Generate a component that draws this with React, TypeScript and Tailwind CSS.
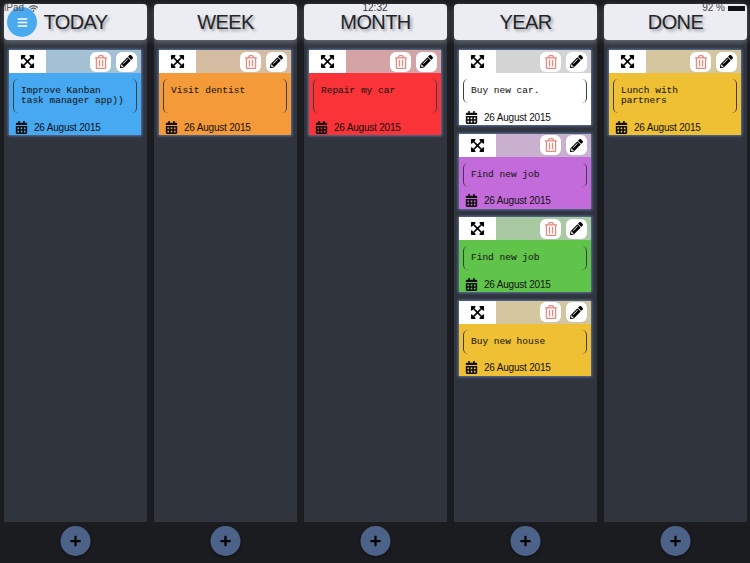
import { FaBars, FaCalendarAlt, FaExpandArrowsAlt, FaPencilAlt, FaPlus, FaRegTrashAlt, FaWifi } from "react-icons/fa";

type Note = { text: string[]; bg: string; head: string; tall?: boolean };

const columns: { title: string; notes: Note[] }[] = [
  { title: "TODAY", notes: [{ text: ["Improve Kanban", "task manager app))"], bg: "bg-[#46a9f2]", head: "bg-[#a3c0d4]", tall: true }] },
  { title: "WEEK", notes: [{ text: ["Visit dentist"], bg: "bg-[#f59a38]", head: "bg-[#d4bda3]", tall: true }] },
  { title: "MONTH", notes: [{ text: ["Repair my car"], bg: "bg-[#fa3338]", head: "bg-[#d4a3a6]", tall: true }] },
  {
    title: "YEAR",
    notes: [
      { text: ["Buy new car."], bg: "bg-white", head: "bg-[#d4d4d4]" },
      { text: ["Find new job"], bg: "bg-[#c46bdb]", head: "bg-[#c9b0cf]" },
      { text: ["Find new job"], bg: "bg-[#61c44a]", head: "bg-[#a9c9a3]" },
      { text: ["Buy new house"], bg: "bg-[#f0c034]", head: "bg-[#d4c7a0]" },
    ],
  },
  { title: "DONE", notes: [{ text: ["Lunch with", "partners"], bg: "bg-[#f0c034]", head: "bg-[#d4c7a0]", tall: true }] },
];

function Card({ note }: { note: Note }) {
  return (
    <div className="border border-[#4d5f7e] rounded-[2px] shrink-0 mb-[6.5px] shadow-[0_0_2px_1px_rgba(77,95,126,0.75)]">
      <div className={`flex items-center h-[23px] ${note.head}`}>
        <div className="w-[37px] h-full bg-white flex items-center justify-center text-black">
          <FaExpandArrowsAlt size={15} />
        </div>
        <div className="ml-auto flex items-center gap-[5px] pr-[4px]">
          <div className="w-[21px] h-[20px] rounded-[6px] bg-white flex items-center justify-center text-[#e58a80]">
            <FaRegTrashAlt size={14} />
          </div>
          <div className="w-[21px] h-[20px] rounded-[6px] bg-white flex items-center justify-center text-black">
            <FaPencilAlt size={13} />
          </div>
        </div>
      </div>
      <div className={`${note.bg} px-[4px] pt-[6px]`}>
        <div
          className={`rounded-[5px] border-x border-[#3a3f4a] pl-[7px] pt-[7px] font-['Liberation_Mono',monospace] text-[9.5px] leading-[10px] text-[#1a1a1a] [text-shadow:0_0_1px_rgba(0,0,0,0.15)] ${note.tall ? "h-[34px]" : "h-[24px]"}`}
        >
          {note.text.map((l) => (
            <div key={l} className="whitespace-pre">{l}</div>
          ))}
        </div>
        <div className="flex items-center h-[16px] mt-[6px] pl-[2px] text-[#111] font-['Liberation_Sans',sans-serif] text-[10px] tracking-[-0.2px]">
          <FaCalendarAlt size={13} />
          <span className="ml-[6px]">26 August 2015</span>
        </div>
      </div>
    </div>
  );
}

export default function App() {
  return (
    <div className="relative w-[750px] h-[563px] overflow-hidden bg-[#1b1c20] font-['Liberation_Sans',sans-serif]">
      <div className="flex gap-[7px] pl-[4px] pt-[4px]">
        {columns.map((c) => (
          <div key={c.title} className="w-[143px] h-[518px] flex flex-col bg-[#2f343d]">
            <div className="h-[36px] shrink-0 rounded-[4px] bg-[#ecedf3] flex items-center justify-center text-[20px] leading-[18px] tracking-[-0.6px] text-[#222428] [text-shadow:2px_2px_3px_rgba(0,0,0,0.35)] shadow-[0_2px_6px_rgba(255,255,255,0.3)]">
              {c.title}
            </div>
            <div className="flex flex-col pl-[4px] pr-[5px] pt-[9px]">
              {c.notes.map((n, i) => (
                <Card key={i} note={n} />
              ))}
            </div>
          </div>
        ))}
      </div>
      <div className="flex gap-[7px] pl-[4px] pt-[4px]">
        {columns.map((c) => (
          <div key={c.title} className="w-[143px] flex justify-center">
            <div className="w-[30px] h-[30px] -translate-x-[0.5px] rounded-full bg-[#4d6288] flex items-center justify-center text-black shadow-[0_1px_3px_rgba(0,0,0,0.5)]">
              <FaPlus size={12} />
            </div>
          </div>
        ))}
      </div>
      <div className="absolute left-[7px] top-[7px] w-[30px] h-[30px] rounded-full bg-[#4aa9ef] flex items-center justify-center text-white">
        <FaBars size={11} />
      </div>
      <div className="absolute left-[4px] top-[3px] flex items-center gap-[5px] text-[10px] leading-[10px] text-[#555]">
        iPad <FaWifi size={9} />
      </div>
      <div className="absolute left-0 right-0 top-[3px] text-center text-[10px] leading-[10px] text-[#333]">12:32</div>
      <div className="absolute right-[5px] top-[3px] flex items-center gap-[3px] text-[10px] leading-[10px] text-[#444]">
        92 %
        <div className="w-[17px] h-[5px] bg-[#111]" />
      </div>
    </div>
  );
}
